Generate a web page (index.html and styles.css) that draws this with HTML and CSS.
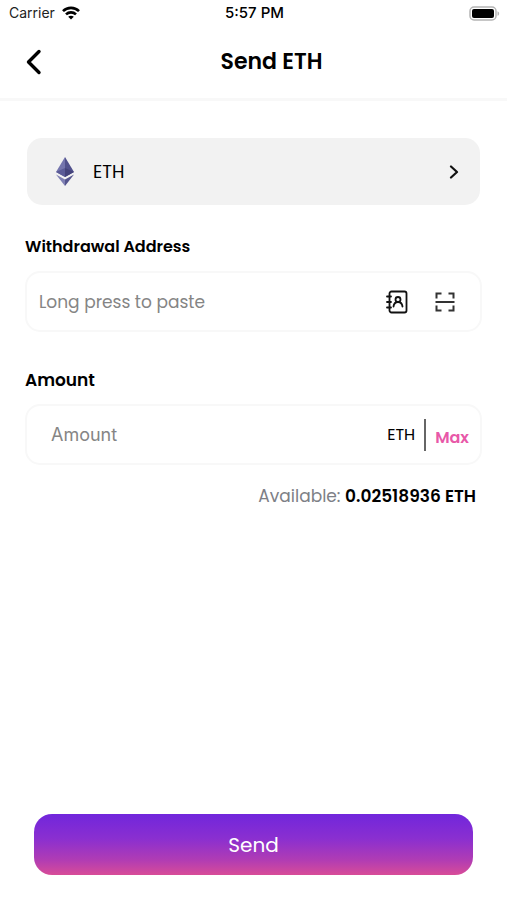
FILE: index.html
```html
<!DOCTYPE html>
<html lang="en">
<head>
<meta charset="utf-8">
<meta name="viewport" content="width=device-width, initial-scale=1">
<title>Send ETH</title>
<link rel="stylesheet" href="styles.css">
</head>
<body>
<div class="screen">
  <div class="status">
    <div class="carrier">
      <span>Carrier</span>
      <svg width="18" height="14" viewBox="0 0 18 14" fill="none" stroke="#000" stroke-width="2.6" aria-hidden="true">
        <path d="M1 5.2C5.4.8 12.6.8 17 5.2"/>
        <path d="M4 8.4c2.8-2.7 7.2-2.7 10 0"/>
        <path d="M9 13.6 6.2 10.8c1.6-1.4 4-1.4 5.6 0z" fill="#000" stroke="none"/>
      </svg>
    </div>
    <span class="time">5:57 PM</span>
    <svg class="battery" width="31" height="15" viewBox="0 0 31 15" aria-hidden="true">
      <rect x="1" y="1" width="26" height="13" rx="4" fill="#fff" stroke="#b4b4b4" stroke-width="1.5"/>
      <rect x="3" y="3" width="22" height="9" rx="2" fill="#000"/>
      <path d="M28.5 5.2c2.2.8 2.2 3.8 0 4.6z" fill="#b4b4b4"/>
    </svg>
  </div>
  <header class="header">
    <button class="icon-button" type="button" aria-label="Back">
      <svg width="16" height="26" viewBox="0 0 16 26" fill="none" stroke="#000" stroke-width="3.4" stroke-linecap="round" stroke-linejoin="round"><path d="M13 2.500 2.500 13 13 23.500"/></svg>
    </button>
    <h1>Send ETH</h1>
  </header>
  <form class="form">
    <button class="asset" type="button">
      <svg width="20" height="30" viewBox="0 0 20 30" aria-hidden="true">
        <path d="M10 0 1 15l9 5z" fill="#7475ad"/>
        <path d="M10 0l9 15-9 5z" fill="#51518c"/>
        <path d="M10 11 1 15l9 5z" fill="#5b5b97"/>
        <path d="M10 11l9 4-9 5z" fill="#44437b"/>
        <path d="M1 17.500 10 29v-6.500z" fill="#8081b4"/>
        <path d="M19 17.500 10 29v-6.500z" fill="#54548d"/>
      </svg>
      <span>ETH</span>
      <svg class="chevron" width="10" height="14" viewBox="0 0 10 14" fill="none" stroke="#111" stroke-width="2.200" stroke-linecap="round" stroke-linejoin="round" aria-hidden="true"><path d="M2 1.500 8 7l-6 5.500"/></svg>
    </button>

    <label class="label" for="address">Withdrawal Address</label>
    <div class="field">
      <input id="address" type="text" placeholder="Long press to paste">
      <div class="tools">
        <button class="icon-button" type="button" aria-label="Address book">
          <svg width="22" height="24" viewBox="0 0 22 24" fill="none" stroke="#111" stroke-width="1.800" stroke-linecap="round" stroke-linejoin="round">
            <rect x="3.500" y="1.500" width="17" height="21" rx="2"/>
            <path d="M1 6.500h4M1 12h4M1 17.500h4"/>
            <circle cx="12" cy="9.500" r="2.500"/>
            <path d="M7.500 16.500c.4-2.800 2-4.500 4.500-4.500s4.100 1.700 4.500 4.500"/>
          </svg>
        </button>
        <button class="icon-button" type="button" aria-label="Scan code">
          <svg width="20" height="20" viewBox="0 0 20 20" fill="none" stroke="#333" stroke-width="2">
            <path d="M1.500 6.500v-5h5M13.500 1.500h5v5M18.500 13.500v5h-5M6.500 18.500h-5v-5M.5 10h19"/>
          </svg>
        </button>
      </div>
    </div>

    <label class="label label-large" for="amount">Amount</label>
    <div class="field amount">
      <input id="amount" type="text" inputmode="decimal" placeholder="Amount">
      <span class="unit">ETH</span>
      <button class="max" type="button">Max</button>
    </div>
    <p class="available">Available: <strong>0.02518936 ETH</strong></p>

    <button class="send" type="submit">Send</button>
  </form>
</div>
</body>
</html>
```
FILE: styles.css
```css
* {
  box-sizing: border-box;
}

body {
  margin: 0;
  background: #fff;
  color: #000;
  font-family: Poppins, Inter, "Liberation Sans", sans-serif;
  font-size: 17px;
  line-height: 24px;
}

button,
input {
  margin: 0;
  padding: 0;
  border: 0;
  background: none;
  color: inherit;
  font: inherit;
}

svg {
  display: block;
  flex: none;
}

.screen {
  display: flex;
  flex-direction: column;
  min-height: 100vh;
}

.status {
  display: grid;
  grid-template-columns: 1fr auto 1fr;
  align-items: center;
  height: 26px;
  padding: 0 7px 0 9px;
  font-family: Inter, sans-serif;
  font-size: 14px;
}

.carrier {
  display: flex;
  align-items: center;
  gap: 7px;
  color: #222;
}

.time {
  font-size: 15px;
  font-weight: 500;
  color: #000;
}

.battery {
  justify-self: end;
}

.header {
  display: grid;
  grid-template-columns: auto 1fr;
  align-items: center;
  height: 75px;
  padding: 0 6px 0 26px;
  border-bottom: 3px solid #f8f8f8;
}

h1 {
  margin: 0;
  font-size: 22px;
  font-weight: 600;
  text-align: center;
}

.form {
  flex: 1;
  display: flex;
  flex-direction: column;
  padding: 37px 25px 25px;
}

.asset {
  display: flex;
  align-items: center;
  gap: 18px;
  height: 67px;
  margin: 0 2px 30px;
  padding: 0 21px 0 28px;
  border-radius: 15px;
  background: #f2f2f2;
  font-size: 18px;
}

.chevron {
  margin-left: auto;
}

.label {
  margin-bottom: 12px;
  font-size: 16px;
  font-weight: 600;
}

.label-large {
  font-size: 17px;
}

.field {
  display: flex;
  align-items: center;
  height: 61px;
  margin-bottom: 36px;
  padding: 0 25px 0 12px;
  border: 2px solid #f8f8f8;
  border-radius: 15px;
}

.field input {
  flex: 1;
  min-width: 0;
  outline: 0;
}

.field input::placeholder {
  color: #858585;
  opacity: 1;
}

.tools {
  display: flex;
  align-items: center;
  gap: 27px;
}

.amount {
  margin-bottom: 19px;
  padding: 0 11px 0 24px;
}

.amount input {
  font-family: Inter, sans-serif;
  font-size: 18px;
}

.unit {
  padding-right: 9px;
  border-right: 2px solid #666;
  font-size: 16px;
  line-height: 32px;
}

.max {
  padding: 6px 0 0 9px;
  color: #e858a8;
  font-size: 16px;
  font-weight: 600;
}

.available {
  margin: 0 6px 0 0;
  color: #7d8086;
  font-size: 17px;
  text-align: right;
}

.available strong {
  color: #000;
  font-weight: 600;
}

.send {
  height: 61px;
  margin: auto 9px 0;
  border-radius: 18px;
  background: linear-gradient(#7126dc, #8a2fd0 40%, #b03cb4 75%, #d84c98);
  color: #fff;
  font-size: 20px;
}
```
